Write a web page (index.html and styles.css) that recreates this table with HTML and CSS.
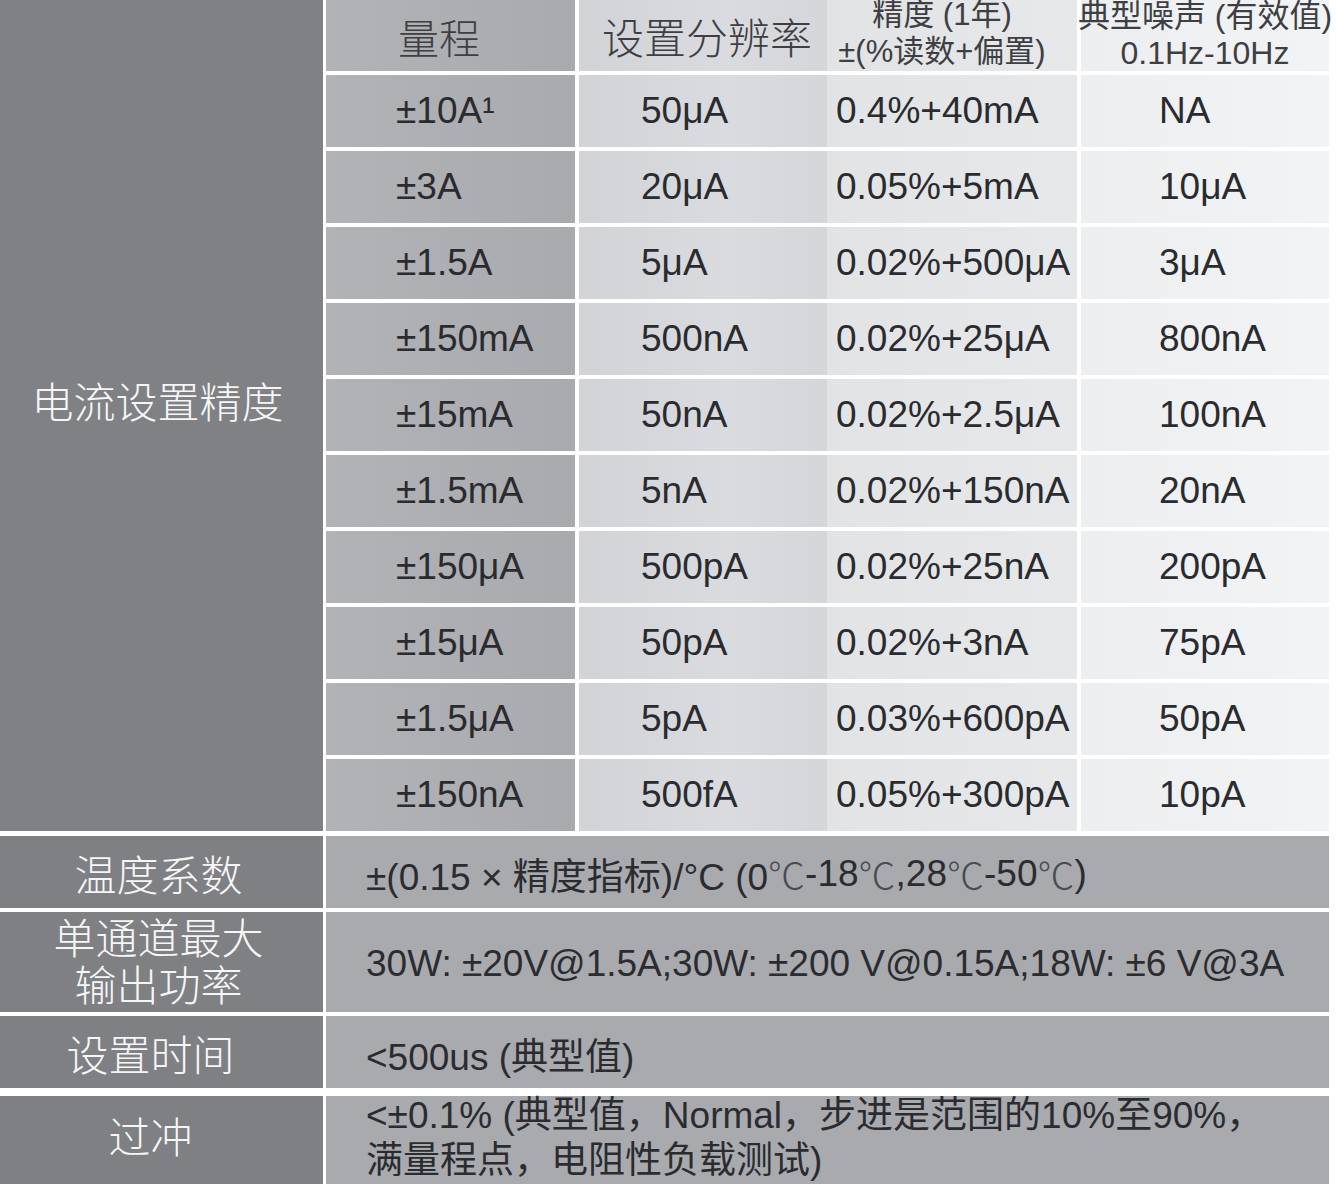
FILE: index.html
```html
<!DOCTYPE html>
<html lang="zh-CN">
<head>
<meta charset="utf-8">
<title>电流设置精度</title>
<link rel="stylesheet" href="styles.css">
</head>
<body>
<main class="spec">
  <section class="spec-grid">
    <div class="side-label">电流设置精度</div>

    <div class="cell c1 head head--big">量程</div>
    <div class="cell c2 head head--big">设置分辨率</div>
    <div class="cell c3 head head--two"><span>精度 (1年)</span><span>±(%读数+偏置)</span></div>
    <div class="cell c4 head head--two head--noise"><span>典型噪声 (有效值)</span><span>0.1Hz-10Hz</span></div>

    <div class="cell c1">±10A¹</div><div class="cell c2">50μA</div><div class="cell c3">0.4%+40mA</div><div class="cell c4">NA</div>
    <div class="cell c1">±3A</div><div class="cell c2">20μA</div><div class="cell c3">0.05%+5mA</div><div class="cell c4">10μA</div>
    <div class="cell c1">±1.5A</div><div class="cell c2">5μA</div><div class="cell c3">0.02%+500μA</div><div class="cell c4">3μA</div>
    <div class="cell c1">±150mA</div><div class="cell c2">500nA</div><div class="cell c3">0.02%+25μA</div><div class="cell c4">800nA</div>
    <div class="cell c1">±15mA</div><div class="cell c2">50nA</div><div class="cell c3">0.02%+2.5μA</div><div class="cell c4">100nA</div>
    <div class="cell c1">±1.5mA</div><div class="cell c2">5nA</div><div class="cell c3">0.02%+150nA</div><div class="cell c4">20nA</div>
    <div class="cell c1">±150μA</div><div class="cell c2">500pA</div><div class="cell c3">0.02%+25nA</div><div class="cell c4">200pA</div>
    <div class="cell c1">±15μA</div><div class="cell c2">50pA</div><div class="cell c3">0.02%+3nA</div><div class="cell c4">75pA</div>
    <div class="cell c1">±1.5μA</div><div class="cell c2">5pA</div><div class="cell c3">0.03%+600pA</div><div class="cell c4">50pA</div>
    <div class="cell c1">±150nA</div><div class="cell c2">500fA</div><div class="cell c3">0.05%+300pA</div><div class="cell c4">10pA</div>
  </section>

  <section class="spec-extra">
    <div class="extra-row">
      <div class="extra-label">温度系数</div>
      <div class="extra-value">±(0.15 × 精度指标)/°C (0<span class="deg">℃</span>-18<span class="deg">℃</span>,28<span class="deg">℃</span>-50<span class="deg">℃</span>)</div>
    </div>
    <div class="extra-row extra-row--power">
      <div class="extra-label extra-label--lines"><span>单通道最大</span><span>输出功率</span></div>
      <div class="extra-value">30W: ±20V@1.5A;30W: ±200 V@0.15A;18W: ±6 V@3A</div>
    </div>
    <div class="extra-row">
      <div class="extra-label extra-label--shift">设置时间</div>
      <div class="extra-value">&lt;500us (典型值)</div>
    </div>
    <div class="extra-row extra-row--overshoot">
      <div class="extra-label extra-label--shift extra-label--up">过冲</div>
      <div class="extra-value extra-value--multi"><span>&lt;±0.1% (典型值，Normal，步进是范围的10%至90%，</span><span>满量程点，电阻性负载测试)</span></div>
    </div>
  </section>
</main>
</body>
</html>
```

FILE: styles.css
```css
* {
  box-sizing: border-box;
}

html, body {
  margin: 0;
  padding: 0;
  background: #ffffff;
}

body {
  width: 1336px;
  height: 1184px;
  overflow: hidden;
  font-family: "Liberation Sans", "Noto Sans CJK SC", sans-serif;
  color: #2b2c30;
}

.spec {
  width: 1336px;
}

/* ---------- top table ---------- */
.spec-grid {
  display: grid;
  grid-template-columns: 323px 252px 252px 250px 252px;
  grid-template-rows: 71px;
  grid-auto-rows: 72px;
  row-gap: 4px;
}

.side-label {
  grid-column: 1;
  grid-row: 1 / span 11;
  background: #7f8185;
  color: #f6f6f6;
  font-family: "Noto Sans CJK SC", sans-serif;
  font-weight: 300;
  font-size: 42px;
  display: flex;
  align-items: center;
  justify-content: center;
  padding-bottom: 33px;
  padding-right: 8px;
}

.cell {
  display: flex;
  align-items: center;
  font-size: 37px;
  white-space: nowrap;
  color: #2a2b2f;
}

.c1 {
  margin-left: 3px;
  padding-left: 70px;
  background: linear-gradient(to right, #b1b3b7, #a8aaae);
}

.c2 {
  margin-left: 4px;
  padding-left: 62px;
  background: linear-gradient(to right, #d1d3d6, #d9dbde 60%, #d4d6d9);
}

.c3 {
  padding-left: 9px;
  background: linear-gradient(to right, #e1e3e5, #e6e8ea);
}

.c4 {
  margin-left: 4px;
  padding-left: 78px;
  background: linear-gradient(to right, #eceef0, #f1f3f4);
}

.head {
  color: #3e3f43;
}

.head--big {
  font-family: "Noto Sans CJK SC", sans-serif;
  font-weight: 300;
  font-size: 41px;
}

.c1.head--big {
  padding-left: 72px;
}

.c2.head--big {
  padding-left: 23px;
  font-size: 42px;
}

.head--two {
  flex-direction: column;
  justify-content: center;
  align-items: center;
  font-size: 31px;
  line-height: 37px;
  padding-left: 0;
  padding-right: 20px;
  padding-top: 2px;
  padding-bottom: 8px;
}

.head--noise {
  padding-right: 0;
  padding-bottom: 4px;
  font-size: 32px;
}

/* ---------- lower rows ---------- */
.spec-extra {
  display: flex;
  flex-direction: column;
  margin-top: 5px;
}

.extra-row {
  display: grid;
  grid-template-columns: 323px 1006px;
  grid-template-rows: minmax(0, 1fr);
  height: 72px;
  margin-top: 4px;
  flex: none;
}

.extra-row:first-child {
  margin-top: 0;
}

.extra-row--power {
  height: 100px;
}

.extra-row--overshoot {
  height: 88px;
  margin-top: 8px;
}

.extra-label {
  background: #7e8084;
  color: #f6f6f6;
  font-family: "Noto Sans CJK SC", sans-serif;
  font-weight: 300;
  font-size: 42px;
  display: flex;
  align-items: center;
  justify-content: center;
  text-align: center;
  padding-right: 6px;
  min-height: 0;
}

.extra-label--lines {
  flex-direction: column;
  line-height: 47px;
  padding-bottom: 6px;
}

.extra-label--shift {
  padding-right: 22px;
}

.extra-label--up {
  padding-bottom: 12px;
}

.extra-value {
  margin-left: 3px;
  background: #a8aaae;
  padding-left: 40px;
  display: flex;
  align-items: center;
  font-size: 37px;
  white-space: nowrap;
  color: #2b2c30;
  padding-top: 4px;
  min-height: 0;
}

.extra-value--multi {
  flex-direction: column;
  align-items: flex-start;
  justify-content: center;
  line-height: 45px;
  padding-top: 0;
  padding-bottom: 4px;
}

.deg {
  font-family: "Noto Sans CJK SC", sans-serif;
  font-weight: 300;
  color: #4a4c50;
}
```
